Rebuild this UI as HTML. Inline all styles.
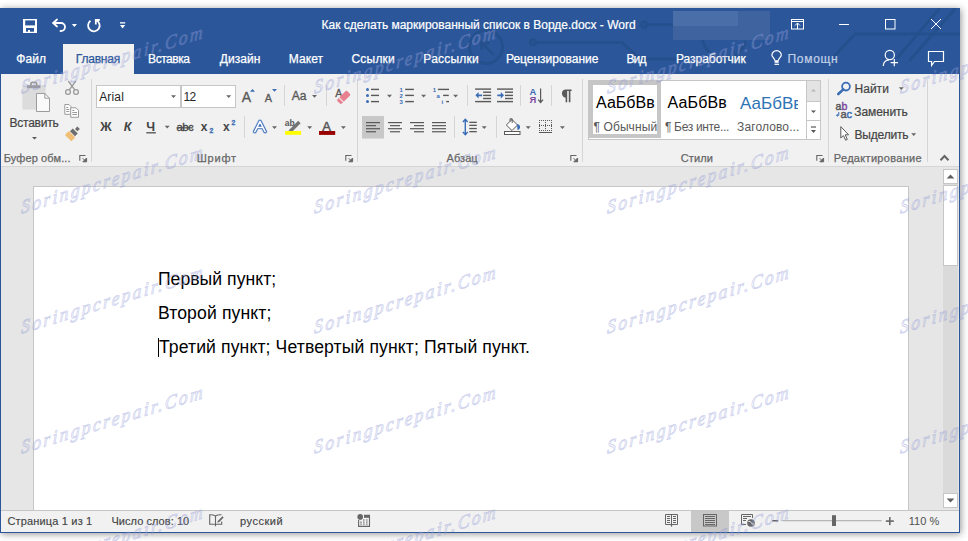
<!DOCTYPE html>
<html><head><meta charset="utf-8">
<style>
*{margin:0;padding:0;box-sizing:border-box}
html,body{width:968px;height:541px;overflow:hidden;background:#fff;font-family:"Liberation Sans",sans-serif;position:relative}
.a{position:absolute;white-space:nowrap;line-height:1}
svg.a{overflow:visible}
.wm{position:absolute;white-space:nowrap;font-family:"Liberation Serif",serif;font-style:italic;font-size:18.5px;line-height:1;color:rgba(235,238,255,.18);-webkit-text-stroke:0.9px rgba(125,135,205,.34);transform-origin:0 100%;transform:rotate(-17deg) skewX(-18deg);letter-spacing:2.35px}
</style></head><body>
<div class="a" style="left:0;top:8px;width:960px;height:525px;background:#2b579a;box-shadow:1px 1px 7px rgba(0,0,0,.42)"></div>
<svg class="a" style="left:0;top:8px;overflow:hidden" width="960" height="66" viewBox="0 8 960 66">
<g fill="none" stroke="#25508e" stroke-width="3" stroke-linecap="round">
<circle cx="486" cy="47" r="16.5"/>
<path d="M493,54 L481.5,42.5 M481.5,49 V42.5 H488"/>
<circle cx="533" cy="42.4" r="2.6"/>
<path d="M535.6,42.4 H622 L640,59 H690"/>
<circle cx="644.3" cy="24.7" r="2.6"/>
<path d="M646.9,24.7 H674"/>
<path d="M703,30 A21,21 0 0 0 745,42"/>
<path d="M834.5,56 L855,34 H960"/>
<path d="M898,57 L939,9"/>
<path d="M910,60 L955,9"/>
</g></svg>
<div class="a" style="left:673px;top:11px;width:97px;height:29px;background:#3e639f"></div>
<div class="a" style="left:673px;top:11px;width:65px;height:15px;background:#4a6ea8"></div>
<svg class="a" style="left:0;top:0" width="140" height="40">
<rect x="23" y="19" width="14" height="14" fill="#fff"/>
<rect x="25.2" y="20.4" width="9.8" height="5" fill="#2b579a"/>
<rect x="26" y="28" width="8" height="3.7" fill="#2b579a"/>
<rect x="28" y="30" width="2" height="2" fill="#fff"/>
<g fill="none" stroke="#fff" stroke-width="1.8" stroke-linecap="round">
<path d="M53.5,23 H61 A4,4 0 0 1 61,31 H60.5"/>
<path d="M57,19.5 L53.2,23 L57,26.5"/>
</g>
<path d="M71.8,24 H77 L74.4,27 Z" fill="#fff"/>
<path d="M90.5,20.8 A5.8,5.8 0 1 0 96.2,20.2" fill="none" stroke="#fff" stroke-width="1.8"/>
<path d="M95.8,24.5 V20 H99.8" fill="none" stroke="#fff" stroke-width="1.8"/>
<rect x="120" y="22.2" width="5.2" height="1.3" fill="#fff"/>
<path d="M120,25 H125.2 L122.6,28.6 Z" fill="#fff"/>
</svg>
<svg class="a" style="left:780px;top:10px" width="180" height="30" viewBox="780 10 180 30">
<g fill="none" stroke="#fff" stroke-width="1">
<rect x="791.5" y="19.5" width="12" height="9.5"/>
<path d="M791.5,21.5 H803.5"/>
<path d="M797.5,23 V29 M795,25.5 L797.5,23 L800,25.5"/>
<path d="M839,24.5 H849"/>
<rect x="885.5" y="19.5" width="9.5" height="9.5"/>
<path d="M931,19 L941,29 M941,19 L931,29"/>
</g></svg>
<div class="a" style="left:321.6px;top:19.2px;font-size:12px;font-weight:400;font-style:normal;letter-spacing:-0.012px;color:#ffffff;-webkit-text-stroke:0.2px #fff">Как сделать маркированный список в Ворде.docx - Word</div>
<div class="a" style="left:63px;top:44px;width:71px;height:31px;background:#f1f1f1"></div>
<div class="a" style="left:16.3px;top:53.0px;font-size:12px;font-weight:400;font-style:normal;letter-spacing:0.067px;color:#ffffff;-webkit-text-stroke:0.25px #fff">Файл</div>
<div class="a" style="left:148.1px;top:53.0px;font-size:12px;font-weight:400;font-style:normal;letter-spacing:-0.45px;color:#ffffff;-webkit-text-stroke:0.25px #fff">Вставка</div>
<div class="a" style="left:219.8px;top:53.0px;font-size:12px;font-weight:400;font-style:normal;letter-spacing:0.04px;color:#ffffff;-webkit-text-stroke:0.25px #fff">Дизайн</div>
<div class="a" style="left:288.8px;top:53.0px;font-size:12px;font-weight:400;font-style:normal;letter-spacing:0.05px;color:#ffffff;-webkit-text-stroke:0.25px #fff">Макет</div>
<div class="a" style="left:351.5px;top:53.0px;font-size:12px;font-weight:400;font-style:normal;letter-spacing:0.2px;color:#ffffff;-webkit-text-stroke:0.25px #fff">Ссылки</div>
<div class="a" style="left:423.3px;top:53.0px;font-size:12px;font-weight:400;font-style:normal;letter-spacing:0.229px;color:#ffffff;-webkit-text-stroke:0.25px #fff">Рассылки</div>
<div class="a" style="left:506.0px;top:53.0px;font-size:12px;font-weight:400;font-style:normal;letter-spacing:-0.015px;color:#ffffff;-webkit-text-stroke:0.25px #fff">Рецензирование</div>
<div class="a" style="left:626.4px;top:53.0px;font-size:12px;font-weight:400;font-style:normal;letter-spacing:-0.8px;color:#ffffff;-webkit-text-stroke:0.25px #fff">Вид</div>
<div class="a" style="left:675.9px;top:53.0px;font-size:12px;font-weight:400;font-style:normal;letter-spacing:-0.01px;color:#ffffff;-webkit-text-stroke:0.25px #fff">Разработчик</div>
<div class="a" style="left:75.8px;top:53.0px;font-size:12px;font-weight:400;font-style:normal;letter-spacing:-0.2px;color:#2b579a;-webkit-text-stroke:0.25px #2b579a">Главная</div>
<div class="a" style="left:787.5px;top:53.0px;font-size:12px;font-weight:400;font-style:normal;letter-spacing:0.7px;color:#c3d1e8;-webkit-text-stroke:0.2px #c3d1e8">Помощн</div>
<svg class="a" style="left:760px;top:44px" width="200" height="30" viewBox="760 44 200 30">
<g fill="none" stroke="#fff" stroke-width="1.2">
<path d="M774.8,60.5 C774.5,58 771.9,56.5 771.9,55.3 A4.7,4.7 0 1 1 781.3,55.3 C781.3,56.5 778.7,58 778.4,60.5"/>
<path d="M774.5,64.3 H779"/>
<circle cx="889.8" cy="55" r="4.6"/>
<path d="M883.2,66 C883.5,62 886,60 889,59.8"/>
<path d="M894.3,59 V66.3 M890.6,62.6 H898"/>
<path d="M928.5,51.5 H943.5 V61.5 H934.5 L931.6,65.5 V61.5 H928.5 Z"/>
</g>
<rect x="774.6" y="60.2" width="4" height="2.6" fill="#fff"/>
</svg>
<div class="a" style="left:1px;top:74px;width:958px;height:92px;background:#f1f1f1"></div>
<div class="a" style="left:1px;top:166px;width:958px;height:1px;background:#d5d5d5"></div>
<div class="a" style="left:91px;top:79px;width:1px;height:83px;background:#d5d5d5"></div>
<div class="a" style="left:357px;top:79px;width:1px;height:83px;background:#d5d5d5"></div>
<div class="a" style="left:582px;top:79px;width:1px;height:83px;background:#d5d5d5"></div>
<div class="a" style="left:828px;top:79px;width:1px;height:83px;background:#d5d5d5"></div>
<div class="a" style="left:927px;top:79px;width:1px;height:83px;background:#d5d5d5"></div>
<div class="a" style="left:244px;top:116px;width:1px;height:22px;background:#d5d5d5"></div>
<div class="a" style="left:284px;top:85px;width:1px;height:21px;background:#d5d5d5"></div>
<div class="a" style="left:326px;top:85px;width:1px;height:21px;background:#d5d5d5"></div>
<div class="a" style="left:467px;top:85px;width:1px;height:21px;background:#d5d5d5"></div>
<div class="a" style="left:520px;top:85px;width:1px;height:21px;background:#d5d5d5"></div>
<div class="a" style="left:551px;top:85px;width:1px;height:21px;background:#d5d5d5"></div>
<div class="a" style="left:454px;top:116px;width:1px;height:22px;background:#d5d5d5"></div>
<div class="a" style="left:496px;top:116px;width:1px;height:22px;background:#d5d5d5"></div>
<div class="a" style="left:3.7px;top:152.6px;font-size:11px;font-weight:400;font-style:normal;letter-spacing:0.118px;color:#666666;-webkit-text-stroke:0.25px #666666">Буфер обм...</div>
<div class="a" style="left:196.7px;top:152.6px;font-size:11px;font-weight:400;font-style:normal;letter-spacing:0.8px;color:#666666;-webkit-text-stroke:0.25px #666666">Шрифт</div>
<div class="a" style="left:446.5px;top:152.6px;font-size:11px;font-weight:400;font-style:normal;letter-spacing:0.075px;color:#666666;-webkit-text-stroke:0.25px #666666">Абзац</div>
<div class="a" style="left:680.7px;top:152.6px;font-size:11px;font-weight:400;font-style:normal;letter-spacing:0.15px;color:#666666;-webkit-text-stroke:0.25px #666666">Стили</div>
<div class="a" style="left:833.8px;top:152.6px;font-size:11px;font-weight:400;font-style:normal;letter-spacing:0.308px;color:#666666;-webkit-text-stroke:0.25px #666666">Редактирование</div>
<div class="a" style="left:9.5px;top:116.5px;font-size:12px;font-weight:400;font-style:normal;letter-spacing:-0.243px;color:#444444;-webkit-text-stroke:0.2px #444444">Вставить</div>
<div class="a" style="left:854.5px;top:82.7px;font-size:12px;font-weight:400;font-style:normal;letter-spacing:0.025px;color:#444444;-webkit-text-stroke:0.2px #444444">Найти</div>
<div class="a" style="left:854.2px;top:105.6px;font-size:12px;font-weight:400;font-style:normal;letter-spacing:-0.057px;color:#444444;-webkit-text-stroke:0.2px #444444">Заменить</div>
<div class="a" style="left:854.5px;top:128.6px;font-size:12px;font-weight:400;font-style:normal;letter-spacing:-0.186px;color:#444444;-webkit-text-stroke:0.2px #444444">Выделить</div>
<svg class="a" style="left:79px;top:154px" width="9" height="9" viewBox="0 0 9 9"><path d="M0.8,6.8 V1.5 H6.5" fill="none" stroke="#666666" stroke-width="1.1"/><path d="M3.6,4.2 L6.6,7.2 M7.6,4 V7.8 H3.8 Z" fill="#666666" stroke="#666666" stroke-width="1"/></svg>
<svg class="a" style="left:345px;top:154px" width="9" height="9" viewBox="0 0 9 9"><path d="M0.8,6.8 V1.5 H6.5" fill="none" stroke="#666666" stroke-width="1.1"/><path d="M3.6,4.2 L6.6,7.2 M7.6,4 V7.8 H3.8 Z" fill="#666666" stroke="#666666" stroke-width="1"/></svg>
<svg class="a" style="left:570px;top:154px" width="9" height="9" viewBox="0 0 9 9"><path d="M0.8,6.8 V1.5 H6.5" fill="none" stroke="#666666" stroke-width="1.1"/><path d="M3.6,4.2 L6.6,7.2 M7.6,4 V7.8 H3.8 Z" fill="#666666" stroke="#666666" stroke-width="1"/></svg>
<svg class="a" style="left:816px;top:154px" width="9" height="9" viewBox="0 0 9 9"><path d="M0.8,6.8 V1.5 H6.5" fill="none" stroke="#666666" stroke-width="1.1"/><path d="M3.6,4.2 L6.6,7.2 M7.6,4 V7.8 H3.8 Z" fill="#666666" stroke="#666666" stroke-width="1"/></svg>
<svg class="a" style="left:938px;top:152px" width="14" height="12" viewBox="938 152 14 12"><path d="M940.5,160.3 L944.5,156 L948.5,160.3" fill="none" stroke="#666666" stroke-width="2"/></svg>
<svg class="a" style="left:0;top:74px" width="92" height="92" viewBox="0 74 92 92">
<rect x="22.3" y="85" width="23.3" height="24.6" fill="#dcdcdc"/>
<rect x="27" y="85.2" width="13.4" height="3" fill="#9c9c9c"/>
<path d="M31,85.5 V83.3 A1.2,1.2 0 0 1 32.2,82.3 H35.4 A1.2,1.2 0 0 1 36.6,83.3 V85.5" fill="none" stroke="#9c9c9c" stroke-width="1.8"/>
<path d="M36.5,93.5 H44.8 L49.5,98.2 V111.5 H36.5 Z" fill="#fafafa" stroke="#9c9c9c" stroke-width="1"/>
<path d="M44.8,93.5 V98.2 H49.5" fill="none" stroke="#9c9c9c" stroke-width="1"/>
<path d="M32,137 L34.5,139.4 L37,137 Z" fill="#595959"/>
<g fill="none" stroke="#9a9a9a" stroke-width="1.3">
<path d="M68.3,81 L74.8,89.8 M75.8,81 L69.3,89.8"/>
<circle cx="68" cy="92" r="2.4"/>
<circle cx="76" cy="92" r="2.4"/>
</g>
<g fill="#fff" stroke="#9a9a9a" stroke-width="1">
<path d="M64.8,104.5 H69 L71,106.5 V114.3 H64.8 Z"/>
<path d="M70.7,107.8 H76 L78.5,110.3 V117.3 H70.7 Z"/>
</g>
<g stroke="#9a9a9a" stroke-width="1">
<path d="M66.3,107.5 H68.3 M66.3,109.5 H69.3 M66.3,111.5 H69.3"/>
<path d="M72.3,110.5 H74.3 M72.3,112.5 H77 M72.3,114.5 H77"/>
</g>
<g transform="rotate(45 72 133)">
<rect x="68.4" y="133.8" width="9" height="5.6" fill="#f1bf73"/>
<rect x="69.4" y="129.3" width="7" height="3.9" fill="#6d6d6d"/>
<rect x="71.2" y="124.6" width="3.5" height="3.4" fill="#6d6d6d"/>
</g>
</svg>
<div class="a" style="left:96px;top:85px;width:85px;height:23px;background:#fff;border:1px solid #c6c6c6"></div>
<div class="a" style="left:181px;top:85px;width:55px;height:23px;background:#fff;border:1px solid #c6c6c6"></div>
<div class="a" style="left:99.2px;top:90.6px;font-size:12px;font-weight:400;font-style:normal;letter-spacing:0.15px;color:#262626;">Arial</div>
<div class="a" style="left:183.5px;top:90.6px;font-size:12px;font-weight:400;font-style:normal;letter-spacing:-0.7px;color:#262626;">12</div>
<svg class="a" style="left:90px;top:74px" width="270" height="92" viewBox="90 74 270 92"><path d="M171,95.3 H176 L173.5,98.1 Z" fill="#666666"/><path d="M226.2,95.3 H231.2 L228.7,98.1 Z" fill="#666666"/><text x="241.8" y="101.8" font-family="Liberation Sans" font-size="14" fill="#595959" stroke="#595959" stroke-width="0.35">A</text><path d="M250,91.8 L252.5,89 L255,91.8 Z" fill="#3a6db5"/><text x="264.8" y="101.8" font-family="Liberation Sans" font-size="10.8" fill="#595959" stroke="#595959" stroke-width="0.35">A</text><path d="M272,89 L277,89 L274.5,91.8 Z" fill="#3a6db5"/><text x="291.8" y="99.8" font-family="Liberation Sans" font-size="12" fill="#595959" stroke="#595959" stroke-width="0.35">Aa</text><path d="M312,95 H317 L314.5,97.8 Z" fill="#666666"/><text x="335.3" y="96.8" font-family="Liberation Sans" font-size="10.5" fill="#595959" stroke="#595959" stroke-width="0.3">A</text><g transform="rotate(-45 343.6 97.4)"><rect x="336.6" y="94.4" width="14" height="6.2" rx="1.4" fill="#e8818f"/><rect x="339.6" y="93" width="1.1" height="9" fill="#f1f1f1"/></g><text x="100.2" y="131" font-family="Liberation Sans" font-size="12.6" font-weight="700" fill="#454545">Ж</text><text x="123.8" y="131" font-family="Liberation Sans" font-size="12.6" font-weight="700" font-style="italic" fill="#454545">К</text><text x="146.2" y="131" font-family="Liberation Sans" font-size="12.6" font-weight="700" fill="#454545">Ч</text><rect x="146.3" y="132.2" width="9.6" height="1.2" fill="#454545"/><path d="M164.7,125.8 H169.7 L167.2,128.6 Z" fill="#666666"/><text x="176.5" y="131" font-family="Liberation Sans" font-size="11.5" fill="#454545" stroke="#454545" stroke-width="0.3" letter-spacing="-0.6">abc</text><rect x="176.5" y="127.3" width="16.6" height="1.1" fill="#454545"/><text x="200.8" y="131" font-family="Liberation Sans" font-size="12" font-weight="700" fill="#454545">x</text><text x="209.4" y="133.2" font-family="Liberation Sans" font-size="6.8" font-weight="700" fill="#3a6db5" stroke="#3a6db5" stroke-width="0.3">2</text><text x="223" y="131" font-family="Liberation Sans" font-size="12" font-weight="700" fill="#454545">x</text><text x="231.5" y="125.3" font-family="Liberation Sans" font-size="6.8" font-weight="700" fill="#3a6db5" stroke="#3a6db5" stroke-width="0.3">2</text><path d="M254.8,131.6 L259.95,121.4 L265.1,131.6 M257.2,127.4 H262.7" fill="none" stroke="#a9c1e6" stroke-width="4.6" stroke-linejoin="round" stroke-linecap="round" opacity="0.6"/><path d="M254.8,131.6 L259.95,121.4 L265.1,131.6 M257.2,127.4 H262.7" fill="none" stroke="#3a6db5" stroke-width="3.4" stroke-linejoin="round" stroke-linecap="round"/><path d="M254.8,131.6 L259.95,121.4 L265.1,131.6 M257.2,127.4 H262.7" fill="none" stroke="#fff" stroke-width="1.5" stroke-linejoin="round" stroke-linecap="round"/><path d="M272,126.2 H277 L274.5,129.0 Z" fill="#666666"/><text x="284.8" y="125.6" font-family="Liberation Sans" font-size="8.5" font-weight="700" fill="#595959">ab</text><path d="M289,130 L298.2,120.8 L300.6,123.2 L291.4,132.4 L288.2,132.9 Z" fill="#737373"/><rect x="285.1" y="131" width="16" height="3.8" fill="#ffff00"/><path d="M307.2,126.2 H312.2 L309.7,129.0 Z" fill="#666666"/><text x="322.3" y="130.5" font-family="Liberation Sans" font-size="13" fill="#595959" stroke="#595959" stroke-width="0.5">A</text><rect x="319" y="131" width="16.2" height="3.9" fill="#990000"/><path d="M340.9,126.2 H345.9 L343.4,129.0 Z" fill="#666666"/></svg>
<svg class="a" style="left:358px;top:74px" width="225" height="92" viewBox="358 74 225 92"><circle cx="367.5" cy="89.4" r="1.5" fill="#3a6db5"/><rect x="371" y="88.7" width="8" height="1.4" fill="#595959"/><circle cx="367.5" cy="95.4" r="1.5" fill="#3a6db5"/><rect x="371" y="94.7" width="8" height="1.4" fill="#595959"/><circle cx="367.5" cy="101.6" r="1.5" fill="#3a6db5"/><rect x="371" y="100.89999999999999" width="8" height="1.4" fill="#595959"/><path d="M387,94.8 H392 L389.5,97.6 Z" fill="#666666"/><text x="399.5" y="91.7" font-family="Liberation Sans" font-size="6" font-weight="700" fill="#3a6db5">1</text><rect x="405.2" y="88.7" width="8.7" height="1.4" fill="#595959"/><text x="399.5" y="97.7" font-family="Liberation Sans" font-size="6" font-weight="700" fill="#3a6db5">2</text><rect x="405.2" y="94.7" width="8.7" height="1.4" fill="#595959"/><text x="399.5" y="103.89999999999999" font-family="Liberation Sans" font-size="6" font-weight="700" fill="#3a6db5">3</text><rect x="405.2" y="100.89999999999999" width="8.7" height="1.4" fill="#595959"/><path d="M421.1,94.8 H426.1 L423.6,97.6 Z" fill="#666666"/><text x="432.8" y="91.7" font-family="Liberation Sans" font-size="6" font-weight="700" fill="#3a6db5">1</text><rect x="437.9" y="88.7" width="11.1" height="1.4" fill="#595959"/><text x="436.6" y="97.7" font-family="Liberation Sans" font-size="6" font-weight="700" fill="#3a6db5">a</text><rect x="443.1" y="94.7" width="5.7" height="1.4" fill="#595959"/><text x="441.6" y="103.9" font-family="Liberation Sans" font-size="6" font-weight="700" fill="#3a6db5">i</text><rect x="446.2" y="100.9" width="2.8" height="1.4" fill="#595959"/><path d="M453.1,94.8 H458.1 L455.6,97.6 Z" fill="#666666"/><rect x="475.1" y="88.4" width="16" height="1.4" fill="#595959"/><rect x="475.1" y="100.9" width="16" height="1.4" fill="#595959"/><rect x="483.1" y="91.5" width="8" height="1.4" fill="#595959"/><rect x="483.1" y="94.7" width="8" height="1.4" fill="#595959"/><rect x="483.1" y="97.8" width="8" height="1.4" fill="#595959"/><path d="M475.40000000000003,95.3 L478.6,92 V94.4 H482.1 V96.2 H478.6 V98.6 Z" fill="#3a6db5"/><rect x="497" y="88.4" width="16" height="1.4" fill="#595959"/><rect x="497" y="100.9" width="16" height="1.4" fill="#595959"/><rect x="505" y="91.5" width="8" height="1.4" fill="#595959"/><rect x="505" y="94.7" width="8" height="1.4" fill="#595959"/><rect x="505" y="97.8" width="8" height="1.4" fill="#595959"/><path d="M504,95.3 L500.8,92 V94.4 H497.3 V96.2 H500.8 V98.6 Z" fill="#3a6db5"/><text x="529.6" y="94.8" font-family="Liberation Sans" font-size="9.4" font-weight="700" fill="#3a6db5">А</text><text x="529.6" y="102.8" font-family="Liberation Sans" font-size="9.4" font-weight="700" fill="#7d4a9c">Я</text><path d="M540.6,88.5 V102.3 M538.2,99.6 L540.6,102.5 L543,99.6" fill="none" stroke="#595959" stroke-width="1.2"/><path d="M566,90.3 A3.2,3.2 0 0 0 566,96.8 Z M566,90.3 H571.6 M566.4,90.3 V102.2 M569.6,90.3 V102.2" fill="#595959" stroke="#595959" stroke-width="1.6"/><rect x="362" y="116" width="22" height="22.6" fill="#c8c8c8"/><rect x="366" y="122.0" width="14" height="1.2" fill="#595959"/><rect x="366" y="125.05" width="10" height="1.2" fill="#595959"/><rect x="366" y="128.1" width="14" height="1.2" fill="#595959"/><rect x="366" y="131.15" width="10" height="1.2" fill="#595959"/><rect x="388" y="122.0" width="14" height="1.2" fill="#595959"/><rect x="390" y="125.05" width="10" height="1.2" fill="#595959"/><rect x="388" y="128.1" width="14" height="1.2" fill="#595959"/><rect x="390" y="131.15" width="10" height="1.2" fill="#595959"/><rect x="410" y="122.0" width="14" height="1.2" fill="#595959"/><rect x="414" y="125.05" width="10" height="1.2" fill="#595959"/><rect x="410" y="128.1" width="14" height="1.2" fill="#595959"/><rect x="414" y="131.15" width="10" height="1.2" fill="#595959"/><rect x="432" y="122.0" width="14" height="1.2" fill="#595959"/><rect x="432" y="125.05" width="14" height="1.2" fill="#595959"/><rect x="432" y="128.1" width="14" height="1.2" fill="#595959"/><rect x="432" y="131.15" width="14" height="1.2" fill="#595959"/><path d="M465.3,119.5 V134.5 M462.9,122 L465.3,119.3 L467.7,122 M462.9,132 L465.3,134.7 L467.7,132" fill="none" stroke="#3a6db5" stroke-width="1.4"/><rect x="469.3" y="121.7" width="7.5" height="1.3" fill="#595959"/><rect x="469.3" y="124.7" width="7.5" height="1.3" fill="#595959"/><rect x="469.3" y="127.9" width="7.5" height="1.3" fill="#595959"/><rect x="469.3" y="131.0" width="7.5" height="1.3" fill="#595959"/><path d="M481.7,126.2 H486.7 L484.2,129.0 Z" fill="#666666"/></svg>
<svg class="a" style="left:497px;top:110px" width="85" height="56" viewBox="497 110 85 56"><path d="M506.3,125 L512,119.5 L517.5,125 L512,130.5 Z" fill="#fff" stroke="#595959" stroke-width="1"/><path d="M510,121.3 V118.8 H512.2 V123" fill="none" stroke="#595959" stroke-width="1"/><path d="M517,124 Q520.5,124.5 520,128 Q519.3,130 517.5,130 Z" fill="#3a6db5"/><rect x="504.5" y="131.5" width="15.5" height="3" fill="#fff" stroke="#595959" stroke-width="1"/><path d="M525.7,126.2 H530.7 L528.2,129.0 Z" fill="#666666"/><rect x="539" y="120" width="1" height="1" fill="#595959"/><rect x="539" y="125" width="1" height="1" fill="#595959"/><rect x="539" y="130" width="1" height="1" fill="#595959"/><rect x="541" y="120" width="1" height="1" fill="#595959"/><rect x="541" y="125" width="1" height="1" fill="#595959"/><rect x="541" y="130" width="1" height="1" fill="#595959"/><rect x="543" y="120" width="1" height="1" fill="#595959"/><rect x="543" y="125" width="1" height="1" fill="#595959"/><rect x="543" y="130" width="1" height="1" fill="#595959"/><rect x="545" y="120" width="1" height="1" fill="#595959"/><rect x="545" y="125" width="1" height="1" fill="#595959"/><rect x="545" y="130" width="1" height="1" fill="#595959"/><rect x="547" y="120" width="1" height="1" fill="#595959"/><rect x="547" y="125" width="1" height="1" fill="#595959"/><rect x="547" y="130" width="1" height="1" fill="#595959"/><rect x="549" y="120" width="1" height="1" fill="#595959"/><rect x="549" y="125" width="1" height="1" fill="#595959"/><rect x="549" y="130" width="1" height="1" fill="#595959"/><rect x="551" y="120" width="1" height="1" fill="#595959"/><rect x="551" y="125" width="1" height="1" fill="#595959"/><rect x="551" y="130" width="1" height="1" fill="#595959"/><rect x="539" y="120" width="1" height="1" fill="#595959"/><rect x="545" y="120" width="1" height="1" fill="#595959"/><rect x="551" y="120" width="1" height="1" fill="#595959"/><rect x="539" y="122" width="1" height="1" fill="#595959"/><rect x="545" y="122" width="1" height="1" fill="#595959"/><rect x="551" y="122" width="1" height="1" fill="#595959"/><rect x="539" y="124" width="1" height="1" fill="#595959"/><rect x="545" y="124" width="1" height="1" fill="#595959"/><rect x="551" y="124" width="1" height="1" fill="#595959"/><rect x="539" y="126" width="1" height="1" fill="#595959"/><rect x="545" y="126" width="1" height="1" fill="#595959"/><rect x="551" y="126" width="1" height="1" fill="#595959"/><rect x="539" y="128" width="1" height="1" fill="#595959"/><rect x="545" y="128" width="1" height="1" fill="#595959"/><rect x="551" y="128" width="1" height="1" fill="#595959"/><rect x="539" y="130" width="1" height="1" fill="#595959"/><rect x="545" y="130" width="1" height="1" fill="#595959"/><rect x="551" y="130" width="1" height="1" fill="#595959"/><rect x="539" y="132" width="13" height="1" fill="#595959"/><path d="M559.9,126.2 H564.9 L562.4,129.0 Z" fill="#666666"/></svg>
<div class="a" style="left:588px;top:80px;width:233px;height:60px;background:#fff;border:1px solid #c6c6c6"></div>
<div class="a" style="left:589px;top:81px;width:72px;height:57px;border:4px solid #c6c6c6"></div>
<div class="a" style="left:806px;top:80px;width:15px;height:60px;border:1px solid #c6c6c6;background:#fff"></div>
<div class="a" style="left:807px;top:81px;width:13px;height:20px;background:#e3e3e3"></div>
<div class="a" style="left:806px;top:101px;width:15px;height:1px;background:#c6c6c6"></div>
<div class="a" style="left:806px;top:120px;width:15px;height:1px;background:#c6c6c6"></div>
<svg class="a" style="left:806px;top:80px" width="15" height="60" viewBox="806 80 15 60">
<path d="M810.9,91.6 L813.45,89 L816,91.6 Z" fill="#b8b8b8"/>
<path d="M810.9,110.4 H816 L813.45,113 Z" fill="#595959"/>
<rect x="810.9" y="126.4" width="5.1" height="1.2" fill="#595959"/>
<path d="M810.9,130 H816 L813.45,132.9 Z" fill="#595959"/>
</svg>
<div class="a" style="left:596.0px;top:94.6px;font-size:16px;font-weight:400;font-style:normal;letter-spacing:0.04px;color:#000000;">АаБбВв</div>
<div class="a" style="left:667.6px;top:94.6px;font-size:16px;font-weight:400;font-style:normal;letter-spacing:0.12px;color:#000000;">АаБбВв</div>
<div class="a" style="left:737px;top:82px;width:61px;height:55px;overflow:hidden"><div class="a" style="left:3.0px;top:12.5px;font-size:17px;letter-spacing:0.0px;color:#2e74b5;">АаБбВв</div></div>
<div class="a" style="left:593.5px;top:120.7px;font-size:12px;font-weight:400;font-style:normal;letter-spacing:0.1px;color:#595959;">¶ Обычный</div>
<div class="a" style="left:665.0px;top:120.7px;font-size:12px;font-weight:400;font-style:normal;letter-spacing:-0.333px;color:#595959;">¶ Без инте...</div>
<div class="a" style="left:737.1px;top:120.7px;font-size:12px;font-weight:400;font-style:normal;letter-spacing:0.11px;color:#595959;">Заголово...</div>
<svg class="a" style="left:830px;top:78px" width="95" height="66" viewBox="830 78 95 66">
<circle cx="846" cy="86.6" r="3.9" fill="none" stroke="#3a6db5" stroke-width="1.8"/>
<path d="M843.3,89.4 L838.3,94" stroke="#3a6db5" stroke-width="2.6" stroke-linecap="round"/>
<path d="M898.8,87.2 H903.8 L901.3,90.0 Z" fill="#666666"/>
<text x="835.6" y="110.3" font-family="Liberation Sans" font-size="10.5" fill="#595959" stroke="#595959" stroke-width="0.45">a</text>
<text x="841.4" y="110.3" font-family="Liberation Sans" font-size="10.5" fill="#7d4a9c" stroke="#7d4a9c" stroke-width="0.45">b</text>
<text x="840.4" y="118" font-family="Liberation Sans" font-size="11" fill="#595959" stroke="#595959" stroke-width="0.45">a</text>
<text x="846.4" y="118" font-family="Liberation Sans" font-size="11" fill="#3a6db5" stroke="#3a6db5" stroke-width="0.45">c</text>
<path d="M838.8,112 V115.3 H836.6 M837.8,114.2 L836.5,115.3 L837.8,116.4" fill="none" stroke="#3a6db5" stroke-width="1"/>
<path d="M840.8,126.6 V138 L843.4,135.5 L845.6,140.2 L847.3,139.4 L845.2,134.8 H848.6 Z" fill="#fff" stroke="#595959" stroke-width="1" stroke-linejoin="round"/>
<path d="M911.2,133.2 H916.2 L913.7,136.0 Z" fill="#666666"/>
</svg>
<div class="a" style="left:1px;top:167px;width:958px;height:343px;background:#e6e6e6"></div>
<div class="a" style="left:33px;top:186px;width:876px;height:324px;background:#fff;border:1px solid #c6c6c6;border-bottom:none"></div>
<div class="a" style="left:157.9px;top:271.1px;font-size:17.6px;font-weight:400;font-style:normal;letter-spacing:0.042px;color:#000000;">Первый пункт;</div>
<div class="a" style="left:157.9px;top:304.9px;font-size:17.6px;font-weight:400;font-style:normal;letter-spacing:0.133px;color:#000000;">Второй пункт;</div>
<div class="a" style="left:158.9px;top:338.8px;font-size:17.6px;font-weight:400;font-style:normal;letter-spacing:0.114px;color:#000000;">Третий пункт; Четвертый пункт; Пятый пункт.</div>
<div class="a" style="left:158px;top:338px;width:1px;height:19px;background:#000"></div>
<div class="a" style="left:943px;top:169px;width:15px;height:339px;background:#dadada"></div>
<div class="a" style="left:943px;top:169px;width:15px;height:15px;background:#fff;border:1px solid #c6c6c6"></div>
<div class="a" style="left:943px;top:185px;width:15px;height:81px;background:#fff;border:1px solid #c6c6c6"></div>
<div class="a" style="left:943px;top:493px;width:15px;height:15px;background:#fff;border:1px solid #c6c6c6"></div>
<svg class="a" style="left:943px;top:169px" width="15" height="340" viewBox="943 169 15 340">
<path d="M946.6,178.5 L950.5,174.6 L954.4,178.5 Z" fill="#606060"/>
<path d="M946.6,498.6 H954.4 L950.5,502.5 Z" fill="#606060"/>
</svg>
<div class="a" style="left:1px;top:510px;width:958px;height:22px;background:#f1f1f1;border-top:1px solid #c6c6c6"></div>
<div class="a" style="left:691px;top:511px;width:38px;height:21px;background:#c8c8c8"></div>
<div class="a" style="left:7.4px;top:516.0px;font-size:11px;font-weight:400;font-style:normal;letter-spacing:0.171px;color:#444444;-webkit-text-stroke:0.15px #444444">Страница 1 из 1</div>
<div class="a" style="left:111.4px;top:516.0px;font-size:11px;font-weight:400;font-style:normal;letter-spacing:0.062px;color:#444444;-webkit-text-stroke:0.15px #444444">Число слов: 10</div>
<div class="a" style="left:240.0px;top:516.0px;font-size:11px;font-weight:400;font-style:normal;letter-spacing:0.533px;color:#444444;-webkit-text-stroke:0.15px #444444">русский</div>
<div class="a" style="left:908.7px;top:515.5px;font-size:11px;font-weight:400;font-style:normal;letter-spacing:0.05px;color:#505050;">110 %</div>
<svg class="a" style="left:200px;top:510px" width="760" height="22" viewBox="200 510 760 22">
<g fill="none" stroke="#666666" stroke-width="1.1">
<path d="M215.5,516 Q213,514.6 209.7,514.8 V524.3 H215.5 V526.3 M215.5,516 V524.3 M215.5,524.3 L216.5,524.3 H221.7 V521.5 M215.5,516 Q217.5,514.6 221.5,514.8"/>
</g>
<path d="M217.8,521 L222.5,516.3 L223.7,517.5 L219,522.2 L217.3,522.6 Z" fill="#666666"/>
<circle cx="360.2" cy="516.9" r="2.8" fill="#666666"/>
<path d="M358.6,520 V526.4 H369.5 V515.4 H364" fill="none" stroke="#666666" stroke-width="1.1"/>
<rect x="364" y="515" width="6" height="2.8" fill="#666666"/>
<g fill="#666666">
<rect x="363" y="519.5" width="1.6" height="1"/><rect x="366" y="519.5" width="1.6" height="1"/>
<rect x="360.2" y="521.6" width="1.6" height="1"/><rect x="363" y="521.6" width="1.6" height="1"/><rect x="366" y="521.6" width="1.6" height="1"/>
<rect x="360.2" y="523.6" width="1.6" height="1"/><rect x="363" y="523.6" width="1.6" height="1"/><rect x="366" y="523.6" width="1.6" height="1"/>
</g>
<g fill="none" stroke="#666666" stroke-width="1">
<path d="M665.5,514.5 H677.5 V524.5 H665.5 Z M671.5,514.5 V526"/>
<path d="M667,516.5 H670 M667,518.5 H670 M667,520.5 H670 M667,522.5 H670 M673,516.5 H676 M673,518.5 H676 M673,520.5 H676 M673,522.5 H676"/>
<rect x="703.5" y="514.5" width="13" height="11.5"/>
<path d="M705,516.5 H715 M705,518.5 H715 M705,520.5 H715 M705,522.5 H715 M705,524.5 H715"/>
<path d="M746,524.5 H741.5 V514.5 H752.5 V518"/>
<path d="M743,516.5 H751 M743,518.5 H747 M743,520.5 H746"/>
</g>
<path d="M670.5,525.5 L671.5,527 L672.5,525.5 Z" fill="#666666"/>
<circle cx="751" cy="523" r="3.8" fill="#666666"/>
<path d="M748.5,521.5 Q750.5,520.8 751.3,522.8 Q752.2,524.8 754,524" fill="none" stroke="#f1f1f1" stroke-width="1"/>
<rect x="772.2" y="520" width="6" height="1.5" fill="#666666"/>
<rect x="782.4" y="520.2" width="99.3" height="1" fill="#a6a6a6"/>
<rect x="832" y="515.2" width="4" height="10.8" fill="#666666"/>
<rect x="885.8" y="520.3" width="8" height="1.6" fill="#666666"/>
<rect x="889" y="517.1" width="1.6" height="8" fill="#666666"/>
</svg>
<div class="wm" style="left:21px;top:79px">Soringpcrepair.Com</div><div class="wm" style="left:314px;top:79px">Soringpcrepair.Com</div><div class="wm" style="left:607px;top:79px">Soringpcrepair.Com</div><div class="wm" style="left:900px;top:79px">Soringpcrepair.Com</div><div class="wm" style="left:21px;top:199px">Soringpcrepair.Com</div><div class="wm" style="left:314px;top:199px">Soringpcrepair.Com</div><div class="wm" style="left:607px;top:199px">Soringpcrepair.Com</div><div class="wm" style="left:900px;top:199px">Soringpcrepair.Com</div><div class="wm" style="left:21px;top:319px">Soringpcrepair.Com</div><div class="wm" style="left:314px;top:319px">Soringpcrepair.Com</div><div class="wm" style="left:607px;top:319px">Soringpcrepair.Com</div><div class="wm" style="left:900px;top:319px">Soringpcrepair.Com</div><div class="wm" style="left:21px;top:439px">Soringpcrepair.Com</div><div class="wm" style="left:314px;top:439px">Soringpcrepair.Com</div><div class="wm" style="left:607px;top:439px">Soringpcrepair.Com</div><div class="wm" style="left:900px;top:439px">Soringpcrepair.Com</div><div class="wm" style="left:21px;top:559px">Soringpcrepair.Com</div><div class="wm" style="left:314px;top:559px">Soringpcrepair.Com</div><div class="wm" style="left:607px;top:559px">Soringpcrepair.Com</div><div class="wm" style="left:900px;top:559px">Soringpcrepair.Com</div>
</body></html>
